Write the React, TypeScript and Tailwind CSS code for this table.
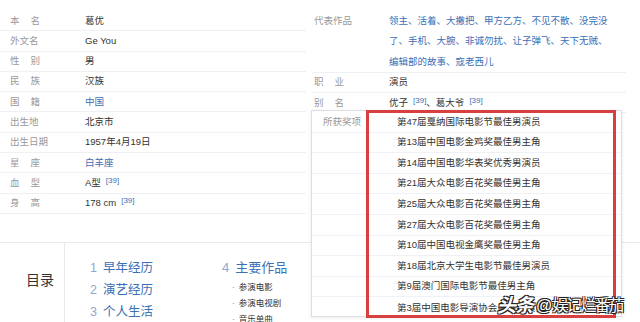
import React from "react";

const CJK = "font-['Liberation_Sans','Noto_Sans_CJK_SC',sans-serif]";

function Ref() {
  return <sup className="ml-[5px] text-[8px] text-[#3b6fb6] relative -top-[2px]">[39]</sup>;
}

function Spaced({ a, b }: { a: string; b: string }) {
  return (
    <span className="flex w-[30px] justify-between">
      <span>{a}</span>
      <span>{b}</span>
    </span>
  );
}

const leftRows: { label: React.ReactNode; value: React.ReactNode }[] = [
  { label: <Spaced a="本" b="名" />, value: "葛优" },
  { label: "外文名", value: "Ge You" },
  { label: <Spaced a="性" b="别" />, value: "男" },
  { label: <Spaced a="民" b="族" />, value: "汉族" },
  { label: <Spaced a="国" b="籍" />, value: <span className="text-[#3b6fb6]">中国</span> },
  { label: "出生地", value: "北京市" },
  { label: "出生日期", value: "1957年4月19日" },
  { label: <Spaced a="星" b="座" />, value: <span className="text-[#3b6fb6]">白羊座</span> },
  { label: <Spaced a="血" b="型" />, value: <>A型<Ref /></> },
  { label: <Spaced a="身" b="高" />, value: <>178 cm<Ref /></> },
];

const awards = [
  "第47届戛纳国际电影节最佳男演员",
  "第13届中国电影金鸡奖最佳男主角",
  "第14届中国电影华表奖优秀男演员",
  "第21届大众电影百花奖最佳男主角",
  "第25届大众电影百花奖最佳男主角",
  "第27届大众电影百花奖最佳男主角",
  "第10届中国电视金鹰奖最佳男主角",
  "第18届北京大学生电影节最佳男演员",
  "第9届澳门国际电影节最佳男主角",
  "第3届中国电影导演协会最佳男演员",
];

export default function App() {
  return (
    <div className={`relative w-[640px] h-[322px] overflow-hidden bg-white ${CJK} text-[9.5px] text-[#333]`}>
      <div className="flex pt-[11px]">
        <div className="w-[306px]">
          {leftRows.map((r, i) => (
            <div key={i} className="flex h-[20.3px] items-center border-b border-[#eef0f4]">
              <div className="w-[85px] pl-[10px] text-[#999]">{r.label}</div>
              <div className="flex items-center">{r.value}</div>
            </div>
          ))}
        </div>
        <div className="ml-[6px] w-[314px]">
          <div className="flex border-b border-[#eef0f4]">
            <div className="w-[77px] pl-[2px] leading-[20.3px] text-[#999]">代表作品</div>
            <div className="w-[222px] leading-[20.3px] text-[#3b6fb6]">
              领主、活着、大撒把、甲方乙方、不见不散、没完没了、手机、大腕、非诚勿扰、让子弹飞、天下无贼、编辑部的故事、寇老西儿
            </div>
          </div>
          <div className="flex h-[20.3px] items-center border-b border-[#eef0f4]">
            <div className="w-[77px] pl-[2px] text-[#999]">
              <span className="flex w-[30px] justify-between"><span>职</span><span>业</span></span>
            </div>
            <div>演员</div>
          </div>
          <div className="flex h-[20.3px] items-center border-b border-[#eef0f4]">
            <div className="w-[77px] pl-[2px] text-[#999]">
              <span className="flex w-[30px] justify-between"><span>别</span><span>名</span></span>
            </div>
            <div className="flex items-center">优子<Ref />、葛大爷<Ref /></div>
          </div>
        </div>
      </div>

      <div className="mt-[28px] flex h-[80px] border-t border-[#e8eaee]">
        <div className="flex w-[65px] items-center justify-center border-r border-[#e8eaee] pl-[16px] pb-[4px] text-[14px] text-[#333]">
          目录
        </div>
        <div className="flex pt-[14px] pl-[25px]">
          <div className="w-[132px] text-[12.5px] leading-[22px]">
            <div><span className="mr-[6px] text-[#8fa9cc]">1</span><span className="text-[#3b6fb6]">早年经历</span></div>
            <div><span className="mr-[6px] text-[#8fa9cc]">2</span><span className="text-[#3b6fb6]">演艺经历</span></div>
            <div><span className="mr-[6px] text-[#8fa9cc]">3</span><span className="text-[#3b6fb6]">个人生活</span></div>
          </div>
          <div>
            <div className="text-[13px] leading-[22px]">
              <span className="mr-[6px] text-[#8fa9cc]">4</span><span className="text-[#3b6fb6]">主要作品</span>
            </div>
            <div className="pl-[10px] text-[8.5px] leading-[16px] text-[#333]">
              <div><span className="mr-[4px] text-[#999]">·</span>参演电影</div>
              <div><span className="mr-[4px] text-[#999]">·</span>参演电视剧</div>
              <div><span className="mr-[4px] text-[#999]">·</span>音乐单曲</div>
            </div>
          </div>
        </div>
      </div>

      {/* popup card */}
      <div className="absolute left-[311px] top-[110px] h-[207px] w-[311px] border border-[#dcdfe4] bg-white shadow-[0_1px_4px_rgba(0,0,0,0.08)]">
        <div className="pt-px">
          {awards.map((a, i) => (
            <div key={i} className="flex h-[20.6px] items-center border-b border-[#f0f1f4] last:border-b-0">
              <div className="w-[85px] pl-[11px] text-[#999]">{i === 0 ? "所获奖项" : ""}</div>
              <div className="text-[#333]">{a}</div>
            </div>
          ))}
        </div>
      </div>
      <div className="absolute left-[366px] top-[110px] h-[208px] w-[250px] border-[3px] border-[#d8403f]" />

      {/* watermark */}
      <div className="absolute left-[497px] top-[292px] flex items-center text-white [text-shadow:1px_1px_0_#222,-1px_-1px_0_#222,1px_-1px_0_#222,-1px_1px_0_#222]">
        <span className="text-[19px] font-bold italic tracking-[-1px]">头条</span>
        <span className="ml-[3px] text-[16px]">@</span>
        <span className="text-[16px] tracking-[-2px]">娱记烂番茄</span>
      </div>
    </div>
  );
}
